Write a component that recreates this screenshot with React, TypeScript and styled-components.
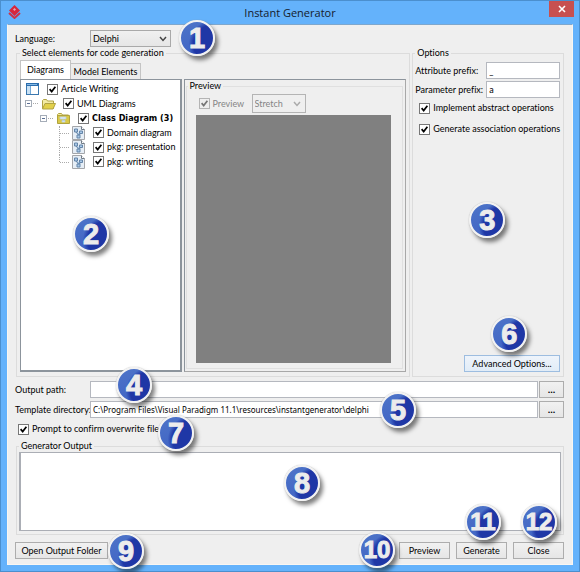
import React from "react";
import styled, { createGlobalStyle, css } from "styled-components";

const ui = 'Lato, "Noto Sans", sans-serif';
const uiBold = '"DejaVu Sans Condensed", "DejaVu Sans", sans-serif';

const GlobalStyle = createGlobalStyle`
  *, *::before, *::after { box-sizing: border-box; }
  html, body { margin: 0; padding: 0; }
  body, input, select, button, textarea {
    font-family: ${ui};
    font-size: 9px;
    line-height: 12px;
    font-variant-ligatures: none;
    color: #000;
  }
`;

const tick = (color: string) =>
  `url("data:image/svg+xml,%3Csvg xmlns='http://www.w3.org/2000/svg' viewBox='0 0 10 10'%3E%3Cpath d='M1.8 4.6 4.1 7.3 8.2 2' fill='none' stroke='${color}' stroke-width='1.9'/%3E%3C/svg%3E")`;

const chevron = (color: string) =>
  `url("data:image/svg+xml,%3Csvg xmlns='http://www.w3.org/2000/svg' viewBox='0 0 8 6'%3E%3Cpath d='M1 1 4 4.4 7 1' fill='none' stroke='${color}' stroke-width='1.5'/%3E%3C/svg%3E")`;

const Window = styled.div`
  display: flex;
  flex-direction: column;
  min-height: 100vh;
  padding: 0 6px 6px;
  background: #64b2fb;
  border: 1px solid #4b8fce;
`;

const TitleBar = styled.header`
  position: relative;
  display: flex;
  align-items: center;
  justify-content: center;
  height: 23px;
`;

const Title = styled.h1`
  margin: 0;
  font: 400 11px/16px "Open Sans", "Noto Sans", sans-serif;
  color: #14202c;
`;

const AppIcon = styled.svg`
  position: absolute;
  left: 1px;
  top: 4px;
  width: 13px;
  height: 14px;
`;

const CloseButton = styled.button`
  position: absolute;
  right: -1px;
  top: 0;
  display: grid;
  place-items: center;
  width: 25px;
  height: 16px;
  padding: 0;
  border: 0;
  background: #c75050;
`;

const Body = styled.main`
  flex: 1;
  display: flex;
  flex-direction: column;
  padding: 5px 8px 5px 7px;
  background: #efefef;
  border: 1px solid #f9f6f2;
  border-top-color: #7ea7cd;
`;

const FieldRow = styled.div`
  position: relative;
  display: grid;
  grid-template-columns: 75px 1fr auto;
  align-items: center;
  min-height: 17px;
  white-space: nowrap;
`;

const PathRows = styled.div`
  display: grid;
  gap: 3px;
  margin-top: 4px;
`;

const Select = styled.select<{ $width: number }>`
  appearance: none;
  width: ${(p) => p.$width}px;
  height: 17px;
  padding: 0 14px 0 2px;
  border: 1px solid #a9a9a9;
  border-radius: 0;
  background:
    ${chevron("%23444")} right 3px center / 8px 6px no-repeat,
    linear-gradient(#f0f0f0, #e6e6e6);
  opacity: 1;
  &:disabled {
    height: 19px;
    color: #858585;
    background: ${chevron("%23aaa")} right 4px center / 8px 6px no-repeat #efefef;
    border-color: #b4b4b4;
  }
`;

const TextInput = styled.input`
  width: 100%;
  min-width: 0;
  height: 17px;
  padding: 0 2px;
  border: 1px solid #b5b8bf;
  border-radius: 0;
  background: #fff;
`;

const PathInput = styled(TextInput)`
  font-family: "Noto Sans", sans-serif;
  font-size: 8px;
`;

const Button = styled.button<{ $width: number; $focused?: boolean }>`
  width: ${(p) => p.$width}px;
  height: 17px;
  padding: 0;
  border: 1px solid #adadad;
  border-radius: 0;
  background: linear-gradient(#f1f1f1, #e6e6e6);
  white-space: nowrap;
  ${(p) =>
    p.$focused &&
    css`
      border-color: #9dbde0;
      background: linear-gradient(#eef4fb, #e1ecf7);
    `}
`;

const BrowseButton = styled(Button)`
  margin-left: 1px;
  font-family: "Noto Sans", sans-serif;
  font-weight: 700;
`;

const Group = styled.fieldset`
  position: relative;
  min-width: 0;
  margin: 0;
  padding: 0 3px 3px;
  border: 1px solid #dcdcdc;
`;

const Legend = styled.legend`
  padding: 0 2px;
  line-height: 12px;
`;

const Columns = styled.div`
  flex: 1;
  display: grid;
  grid-template-columns: minmax(0, 395fr) minmax(0, 152fr);
  gap: 2px;
  margin: 0 0 0 1px;
`;

const ElementsGroup = styled(Group)`
  display: flex;
  flex-direction: column;
`;

const Tabs = styled.div`
  display: flex;
  align-items: flex-end;
  height: 19px;
  margin-top: 1px;
`;

const Tab = styled.button<{ $active?: boolean }>`
  height: ${(p) => (p.$active ? 19 : 16)}px;
  padding: 0;
  width: ${(p) => (p.$active ? 51 : 70)}px;
  border: 1px solid #c4c4c4;
  border-left-width: ${(p) => (p.$active ? 1 : 0)}px;
  border-bottom: 0;
  background: ${(p) => (p.$active ? "#fff" : "#ececec")};
  white-space: nowrap;
`;

const Split = styled.div`
  flex: 1;
  display: grid;
  grid-template-columns: minmax(0, 161fr) minmax(0, 222fr);
  gap: 2px;
  padding-bottom: 1px;
`;

const TreePane = styled.div`
  position: relative;
  padding: 2px 4px;
  background: #fff;
  border: 1px solid #8c949c;
  border-width: 1px 2px 2px 1px;
`;

const Tree = styled.ul`
  display: grid;
  grid-auto-rows: 1fr;
  height: 87px;
  margin: 0;
  padding: 0;
  list-style: none;
`;

const TreeRow = styled.li<{ $indent: number; $bold?: boolean }>`
  position: relative;
  display: flex;
  align-items: center;
  padding-left: ${(p) => p.$indent}px;
  ${(p) =>
    p.$bold &&
    css`
      font-family: ${uiBold};
      font-weight: 700;
    `}
`;

const Expander = styled.span`
  position: relative;
  width: 7px;
  height: 7px;
  margin-right: 9px;
  border: 1px solid #a5adb8;
  background: linear-gradient(#5b6f94, #5b6f94) center / 3px 1px no-repeat #fff;
  &::after {
    content: "";
    position: absolute;
    left: 7px;
    top: 2px;
    width: 5px;
    border-top: 1px dotted #aaa;
  }
`;

const Branch = styled.span<{ $last?: boolean }>`
  position: absolute;
  left: 34px;
  top: 0;
  width: 9px;
  height: ${(p) => (p.$last ? "50%" : "100%")};
  border-left: 1px dotted #aaa;
  &::after {
    content: "";
    position: absolute;
    left: 0;
    top: ${(p) => (p.$last ? "100%" : "50%")};
    width: 9px;
    border-top: 1px dotted #aaa;
  }
`;

const NodeIcon = styled.svg`
  width: 15px;
  height: 14px;
  margin-right: 7px;
  flex: none;
`;

const CheckLabel = styled.label<{ $muted?: boolean }>`
  display: inline-flex;
  align-items: center;
  gap: 3px;
  white-space: nowrap;
  color: ${(p) => (p.$muted ? "#858585" : "inherit")};
`;

const CheckBox = styled.input.attrs({ type: "checkbox" })`
  appearance: none;
  flex: none;
  width: 11px;
  height: 11px;
  margin: 0;
  border: 1px solid #777;
  background: #fff;
  &:checked {
    background: ${tick("%23000")} center / 9px 9px no-repeat #fff;
  }
  &:disabled {
    border-color: #b4b4b4;
    background: ${tick("%23777")} center / 9px 9px no-repeat #efefef;
  }
`;

const PreviewPane = styled.div`
  display: flex;
  border: 1px solid #8c949c;
  border-right-color: #a8a8a8;
  border-bottom-color: #a8a8a8;
  padding: 0 2px 2px 1px;
`;

const PreviewGroup = styled(Group)`
  flex: 1;
  display: flex;
  flex-direction: column;
  padding: 0 11px 5px 9px;
  border-color: #e0e0e0;
  & > legend {
    margin-left: -8px;
  }
`;

const PreviewTools = styled.div`
  display: flex;
  align-items: center;
  justify-content: space-between;
  width: 110px;
  padding: 2px 0 2px 3px;
`;

const Canvas = styled.div`
  flex: 1;
  min-height: 80px;
  background: #808080;
`;

const OptionsGroup = styled(Group)`
  display: flex;
  flex-direction: column;
  padding: 3px 3px 4px 2px;
`;

const OptionFields = styled.div`
  display: grid;
  grid-template-columns: 71px 1fr;
  align-items: center;
  row-gap: 2px;
  white-space: nowrap;
`;

const OptionChecks = styled.div`
  display: grid;
  gap: 9px;
  padding: 4px;
`;

const OptionsFooter = styled.div`
  position: relative;
  display: flex;
  justify-content: flex-end;
  margin-top: auto;
`;

const PromptRow = styled.div`
  position: relative;
  padding: 5px 3px;
  height: 22px;
`;

const OutputGroup = styled(Group)`
  display: flex;
  margin-left: 1px;
  padding: 0 2px 3px;
`;

const OutputText = styled.textarea`
  display: block;
  width: 100%;
  height: 79px;
  resize: none;
  border: 1px solid #abaeb5;
  border-width: 1px 1px 1px 2px;
  border-radius: 0;
`;

const Footer = styled.footer`
  display: flex;
  gap: 6px;
  margin-top: 7px;
`;

const ButtonHolder = styled.div<{ $push?: boolean }>`
  position: relative;
  margin-right: ${(p) => (p.$push ? "auto" : "0")};
`;

const Badge = styled.span<{ $x: number; $y: number; $wide?: boolean }>`
  position: absolute;
  z-index: 2;
  left: ${(p) => p.$x}px;
  top: ${(p) => p.$y}px;
  display: grid;
  place-items: center;
  width: 36px;
  height: 36px;
  border: 2px solid #f2f2f2;
  border-radius: 50%;
  background:
    radial-gradient(circle at 100% 70%, #1f37a6 50%, transparent 62%),
    linear-gradient(160deg, #4d74c8, #3f62c4);
  box-shadow: 0 0 1px #999, 3px 4px 4px rgba(0, 0, 0, 0.5);
  color: #ececec;
  -webkit-text-stroke: 1px #ececec;
  font: 700 ${(p) => (p.$wide ? 24 : 29)}px/32px "Liberation Sans", Arial, sans-serif;
  pointer-events: none;
`;

const ProjectIcon = () => (
  <NodeIcon viewBox="0 0 15 14" aria-hidden="true">
    <rect x="1.5" y="1.5" width="12" height="11" fill="#fff" stroke="#3a77ae" />
    <path d="M1 1h13v3H1z" fill="#2b6dad" />
    <path d="M2 4h3v8H2z" fill="#c8e1f5" />
    <path d="M5.5 4v8" stroke="#72a8d5" />
    <path d="M2 2.5h10" stroke="#84b9e5" />
  </NodeIcon>
);

const FolderIcon = ({ diagram }: { diagram?: boolean }) => (
  <NodeIcon viewBox="0 0 15 14" aria-hidden="true">
    <path d="M1.5 11.5v-8l1-1h3l1 1.5h6v7.5z" fill="#f3eba4" stroke="#b1a344" />
    {diagram ? (
      <>
        <path d="M1.5 4.5h12v8h-12z" fill="#d9c849" stroke="#b0a33c" />
        <path d="M4 6h6v2H4zM6 9.5h3V11H6zM7 8v2" fill="#e7f1fa" stroke="#b5cde0" strokeWidth=".8" />
      </>
    ) : (
      <path d="M1.5 12 4 6.5h10.5L12 12z" fill="#e2d04a" stroke="#b1a344" />
    )}
  </NodeIcon>
);

const DiagramIcon = () => (
  <NodeIcon viewBox="0 0 15 14" aria-hidden="true">
    <path d="M1.5.5h9l3 3v10h-12z" fill="#e6eef6" stroke="#a4a6aa" />
    <path d="M10.5.5v3h3" fill="#fff" stroke="#707b87" />
    <path d="M3.5 3h3v3h-3zM8.5 5h3v2.5h-3zM6 9h3v3H6zM5 6l2.5 3L10 7.5" fill="#a9c9e8" stroke="#6585a8" />
  </NodeIcon>
);

const leaves = ["Domain diagram", "pkg: presentation", "pkg: writing"];

export default function App() {
  return (
    <>
      <GlobalStyle />
      <Window>
        <TitleBar>
          <AppIcon viewBox="0 0 13 14" aria-hidden="true">
            <path d="m6.500 0 5.500 5.500L6.500 11 1 5.500z" fill="#d7263c" />
            <path d="M1 8 6.500 13 12 8" fill="none" stroke="#ce3147" strokeWidth="2" />
            <path d="m5 4.500 1.500-1.500L8 4.500 6.500 6z" fill="#e8a3b2" />
          </AppIcon>
          <Title>Instant Generator</Title>
          <CloseButton aria-label="Close window">
            <svg width="8" height="8" viewBox="0 0 8 8" aria-hidden="true">
              <path d="m1 1 6 6m0-6L1 7" stroke="#fff" strokeWidth="1.6" />
            </svg>
          </CloseButton>
        </TitleBar>
        <Body>
          <FieldRow>
            <label htmlFor="language">Language:</label>
            <Select id="language" $width={81} defaultValue="Delphi">
              <option>Delphi</option>
            </Select>
            <Badge $x={164} $y={-10}>1</Badge>
          </FieldRow>
          <Columns>
            <ElementsGroup>
              <Legend>Select elements for code generation</Legend>
              <Tabs role="tablist">
                <Tab role="tab" aria-selected="true" $active>Diagrams</Tab>
                <Tab role="tab" aria-selected="false">Model Elements</Tab>
              </Tabs>
              <Split>
                <TreePane>
                  <Tree>
                    <TreeRow $indent={0}>
                      <ProjectIcon />
                      <CheckLabel><CheckBox defaultChecked />Article Writing</CheckLabel>
                    </TreeRow>
                    <TreeRow $indent={0}>
                      <Expander /><FolderIcon />
                      <CheckLabel><CheckBox defaultChecked />UML Diagrams</CheckLabel>
                    </TreeRow>
                    <TreeRow $indent={15} $bold>
                      <Expander /><FolderIcon diagram />
                      <CheckLabel><CheckBox defaultChecked />Class Diagram (3)</CheckLabel>
                    </TreeRow>
                    {leaves.map((name, i) => (
                      <TreeRow key={name} $indent={46}>
                        <Branch $last={i === leaves.length - 1} />
                        <DiagramIcon />
                        <CheckLabel><CheckBox defaultChecked />{name}</CheckLabel>
                      </TreeRow>
                    ))}
                  </Tree>
                  <Badge $x={52} $y={136}>2</Badge>
                </TreePane>
                <PreviewPane>
                  <PreviewGroup>
                    <Legend>Preview</Legend>
                    <PreviewTools>
                      <CheckLabel $muted><CheckBox defaultChecked disabled />Preview</CheckLabel>
                      <Select $width={54} disabled aria-label="Preview size" defaultValue="Stretch">
                        <option>Stretch</option>
                      </Select>
                    </PreviewTools>
                    <Canvas />
                  </PreviewGroup>
                </PreviewPane>
              </Split>
            </ElementsGroup>
            <OptionsGroup>
              <Legend>Options</Legend>
              <OptionFields>
                <label htmlFor="attr">Attribute prefix:</label>
                <TextInput id="attr" defaultValue="_" />
                <label htmlFor="param">Parameter prefix:</label>
                <TextInput id="param" defaultValue="a" />
              </OptionFields>
              <OptionChecks>
                <CheckLabel><CheckBox defaultChecked />Implement abstract operations</CheckLabel>
                <CheckLabel><CheckBox defaultChecked />Generate association operations</CheckLabel>
              </OptionChecks>
              <Badge $x={56} $y={143}>3</Badge>
              <OptionsFooter>
                <Button $width={96} $focused>Advanced Options...</Button>
                <Badge $x={76} $y={-39}>6</Badge>
              </OptionsFooter>
            </OptionsGroup>
          </Columns>
          <PathRows>
            <FieldRow>
              <label htmlFor="output">Output path:</label>
              <PathInput id="output" />
              <BrowseButton $width={25} aria-label="Browse output path">...</BrowseButton>
              <Badge $x={101} $y={-14}>4</Badge>
            </FieldRow>
            <FieldRow>
              <label htmlFor="template">Template directory:</label>
              <PathInput
                id="template"
                defaultValue="C:\Program Files\Visual Paradigm 11.1\resources\instantgenerator\delphi"
              />
              <BrowseButton $width={25} aria-label="Browse template directory">...</BrowseButton>
              <Badge $x={365} $y={-9}>5</Badge>
            </FieldRow>
          </PathRows>
          <PromptRow>
            <CheckLabel><CheckBox defaultChecked />Prompt to confirm overwrite file</CheckLabel>
            <Badge $x={143} $y={-3}>7</Badge>
          </PromptRow>
          <OutputGroup>
            <Legend>Generator Output</Legend>
            <OutputText aria-label="Generator Output" />
            <Badge $x={267} $y={13}>8</Badge>
          </OutputGroup>
          <Footer>
            <ButtonHolder $push>
              <Button $width={93}>Open Output Folder</Button>
              <Badge $x={93} $y={-9}>9</Badge>
            </ButtonHolder>
            <ButtonHolder>
              <Button $width={51}>Preview</Button>
              <Badge $x={-40} $y={-10} $wide>10</Badge>
            </ButtonHolder>
            <ButtonHolder>
              <Button $width={51}>Generate</Button>
              <Badge $x={9} $y={-38} $wide>11</Badge>
            </ButtonHolder>
            <ButtonHolder>
              <Button $width={51}>Close</Button>
              <Badge $x={8} $y={-38} $wide>12</Badge>
            </ButtonHolder>
          </Footer>
        </Body>
      </Window>
    </>
  );
}
